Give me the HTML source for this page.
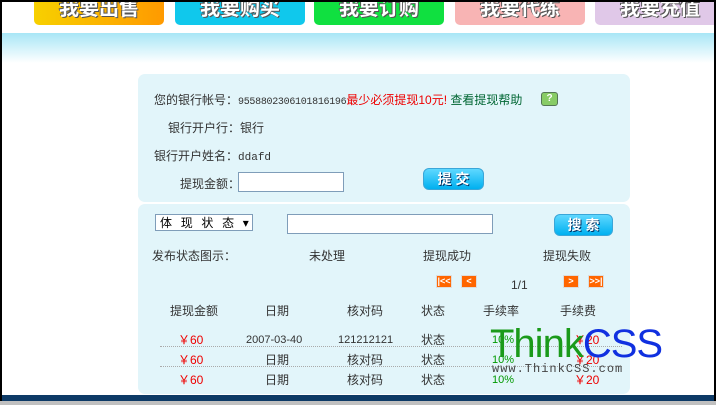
<!DOCTYPE html>
<html><head><meta charset="utf-8"><style>
*{margin:0;padding:0;box-sizing:border-box}
body{width:716px;height:405px;overflow:hidden;background:#c0c0c0;font-family:"Liberation Sans","Noto Sans CJK SC",sans-serif;font-size:12px;color:#333;position:relative}
.frame{position:absolute;left:0;top:0;width:716px;height:401px;border:2px solid #000;border-bottom:none;background:#fff;overflow:hidden}
.grad{position:absolute;left:0;top:31px;width:712px;height:30px;background:linear-gradient(#a8e6f6,#fff)}
.tab{position:absolute;top:-4px;height:27px;border-radius:0 0 5px 5px;color:#fff;font-weight:bold;font-size:20px;text-align:center;line-height:22px;text-shadow:1px 1px 0 #555,-1px -1px 0 #555}
.p{position:absolute;background:#e2f5fa;border-radius:7px}
.a{position:absolute;white-space:nowrap;line-height:14px}
.btn{position:absolute;border-radius:6px;background:linear-gradient(#5fd8ff,#00b0f0);border:1px solid #3aa6d8;color:#fff;font-weight:bold;font-size:14px;text-align:center;text-shadow:1px 1px 0 #036}
.in{position:absolute;background:#fff;border:1px solid #7f9db9}
.pg{position:absolute;width:16px;height:13px;background:#f60;border:1px solid #ddd;color:#fff;font-size:9px;font-weight:bold;text-align:center;line-height:11px}
.r{color:#e00}.g{color:#090}
.dot{position:absolute;left:158px;width:462px;border-top:1px dotted #aaa}
</style></head><body>
<div class="frame">
<div class="grad"></div>
<div class="tab" style="left:32px;width:130px;background:linear-gradient(90deg,#f7d000,#ff9a00)">我要出售</div>
<div class="tab" style="left:173px;width:130px;background:#10c8ec">我要购买</div>
<div class="tab" style="left:312px;width:130px;background:#10e040">我要订购</div>
<div class="tab" style="left:453px;width:130px;background:#f8b4b4">我要代练</div>
<div class="tab" style="left:593px;width:130px;background:#e0c8e8">我要充值</div>

<div class="p" style="left:136px;top:72px;width:492px;height:128px"></div>
<div class="p" style="left:136px;top:202px;width:492px;height:190px"></div>

<div class="a" style="left:152px;top:91px">您的银行帐号：<span style="font-family:'Liberation Mono',monospace;font-size:10px;letter-spacing:-0.3px">9558802306101816196</span><span class="r">最少必须提现10元!</span> <span style="color:#063">查看提现帮助</span></div>
<div class="a" style="left:539px;top:90px;width:17px;height:14px;background:#8c6;border:1px solid #575;border-radius:3px;color:#fff;font-size:10px;font-weight:bold;text-align:center;line-height:12px">?</div>
<div class="a" style="left:166px;top:119px">银行开户行：银行</div>
<div class="a" style="left:152px;top:147px">银行开户姓名：<span style="font-family:'Liberation Mono',monospace;font-size:11px">ddafd</span></div>
<div class="a" style="left:178px;top:175px">提现金额：</div>
<div class="in" style="left:236px;top:170px;width:106px;height:20px"></div>
<div class="btn" style="left:421px;top:166px;width:61px;height:22px;line-height:20px">提 交</div>

<div class="in" style="left:153px;top:212px;width:98px;height:17px;font-family:'Noto Sans CJK SC',sans-serif;color:#000;line-height:15px;padding-left:4px;letter-spacing:3px">体 现 状 态 ▾</div>
<div class="in" style="left:285px;top:212px;width:206px;height:20px"></div>
<div class="btn" style="left:552px;top:212px;width:59px;height:22px;line-height:20px">搜 索</div>
<div class="a" style="left:150px;top:247px">发布状态图示：</div>
<div class="a" style="left:307px;top:247px">未处理</div>
<div class="a" style="left:421px;top:247px">提现成功</div>
<div class="a" style="left:541px;top:247px">提现失败</div>
<div class="pg" style="left:434px;top:273px">|&lt;&lt;</div>
<div class="pg" style="left:459px;top:273px">&lt;</div>
<div class="a" style="left:509px;top:276px">1/1</div>
<div class="pg" style="left:561px;top:273px">&gt;</div>
<div class="pg" style="left:586px;top:273px">&gt;&gt;|</div>

<div class="a" style="left:168px;top:302px">提现金额</div>
<div class="a" style="left:263px;top:302px">日期</div>
<div class="a" style="left:345px;top:302px">核对码</div>
<div class="a" style="left:419px;top:302px">状态</div>
<div class="a" style="left:481px;top:302px">手续率</div>
<div class="a" style="left:558px;top:302px">手续费</div>

<div class="a r" style="left:176px;top:331px">￥60</div><div class="a" style="left:244px;top:331px;font-size:11px">2007-03-40</div><div class="a" style="left:336px;top:331px;font-size:11px">121212121</div><div class="a" style="left:419px;top:331px">状态</div><div class="a g" style="left:490px;top:331px;font-size:11px">10%</div><div class="a r" style="left:572px;top:331px">￥20</div>
<div class="dot" style="top:344px"></div>
<div class="a r" style="left:176px;top:351px">￥60</div><div class="a" style="left:263px;top:351px">日期</div><div class="a" style="left:345px;top:351px">核对码</div><div class="a" style="left:419px;top:351px">状态</div><div class="a g" style="left:490px;top:351px;font-size:11px">10%</div><div class="a r" style="left:572px;top:351px">￥20</div>
<div class="dot" style="top:364px"></div>
<div class="a r" style="left:176px;top:371px">￥60</div><div class="a" style="left:263px;top:371px">日期</div><div class="a" style="left:345px;top:371px">核对码</div><div class="a" style="left:419px;top:371px">状态</div><div class="a g" style="left:490px;top:371px;font-size:11px">10%</div><div class="a r" style="left:572px;top:371px">￥20</div>

<div class="a" style="left:488px;top:322px;line-height:40px;font-size:40px;font-family:'Liberation Sans',sans-serif;letter-spacing:-1px"><span style="color:#1a9a1a">Think</span><span style="color:#1030e0">CSS</span></div>
<div class="a" style="left:490px;top:360px;font-family:'Liberation Mono',monospace;font-size:12px;color:#444;letter-spacing:1px">www.ThinkCSS.com</div>

<div class="a" style="left:0;top:393px;width:712px;height:8px;background:#0d3a66"></div>
</div>
</body></html>
